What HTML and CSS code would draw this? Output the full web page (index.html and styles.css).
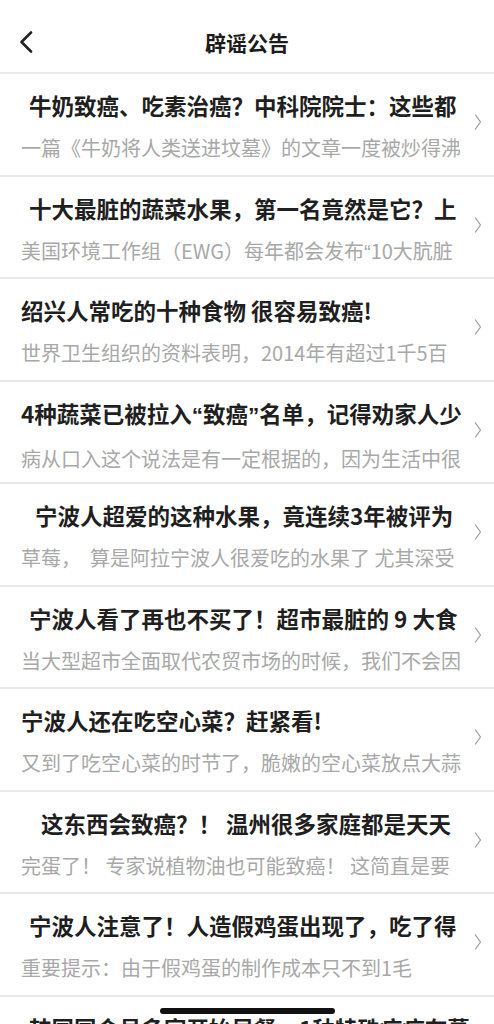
FILE: index.html
```html
<!DOCTYPE html>
<html lang="zh-CN">
<head>
<meta charset="utf-8">
<title>辟谣公告</title>
<link rel="stylesheet" href="styles.css">
</head>
<body>
<div class="page">
  <header class="topbar">
    <svg class="back" viewBox="0 0 14 22" width="14" height="22"><path d="M12 1.5 L2.5 11 L12 20.5" fill="none" stroke="#222" stroke-width="2.6" stroke-linecap="round" stroke-linejoin="round"/></svg>
    <h1 class="topbar-title">辟谣公告</h1>
  </header>
  <ul class="list">
    <li class="item">
      <div class="text">
        <div class="title indent-s">牛奶致癌、吃素治癌？中科院院士：这些都</div>
        <div class="summary">一篇《牛奶将人类送进坟墓》的文章一度被炒得沸</div>
      </div>
      <svg class="chev" viewBox="0 0 8 16" width="8" height="16"><path d="M1.5 1 L6.5 8 L1.5 15" fill="none" stroke="#9a9a9a" stroke-width="1.2" stroke-linecap="round" stroke-linejoin="round"/></svg>
    </li>
    <li class="item">
      <div class="text">
        <div class="title indent-s">十大最脏的蔬菜水果，第一名竟然是它？上</div>
        <div class="summary">美国环境工作组（EWG）每年都会发布<span class="latin">“</span>10大肮脏</div>
      </div>
      <svg class="chev" viewBox="0 0 8 16" width="8" height="16"><path d="M1.5 1 L6.5 8 L1.5 15" fill="none" stroke="#9a9a9a" stroke-width="1.2" stroke-linecap="round" stroke-linejoin="round"/></svg>
    </li>
    <li class="item">
      <div class="text">
        <div class="title">绍兴人常吃的十种食物 很容易致癌!</div>
        <div class="summary">世界卫生组织的资料表明，2014年有超过1千5百</div>
      </div>
      <svg class="chev" viewBox="0 0 8 16" width="8" height="16"><path d="M1.5 1 L6.5 8 L1.5 15" fill="none" stroke="#9a9a9a" stroke-width="1.2" stroke-linecap="round" stroke-linejoin="round"/></svg>
    </li>
    <li class="item">
      <div class="text">
        <div class="title">4种蔬菜已被拉入<span class="latin">“</span>致癌<span class="latin">”</span>名单，记得劝家人少</div>
        <div class="summary">病从口入这个说法是有一定根据的，因为生活中很</div>
      </div>
      <svg class="chev" viewBox="0 0 8 16" width="8" height="16"><path d="M1.5 1 L6.5 8 L1.5 15" fill="none" stroke="#9a9a9a" stroke-width="1.2" stroke-linecap="round" stroke-linejoin="round"/></svg>
    </li>
    <li class="item">
      <div class="text">
        <div class="title indent-m">宁波人超爱的这种水果，竟连续3年被评为</div>
        <div class="summary">草莓，&nbsp;&nbsp;算是阿拉宁波人很爱吃的水果了 尤其深受</div>
      </div>
      <svg class="chev" viewBox="0 0 8 16" width="8" height="16"><path d="M1.5 1 L6.5 8 L1.5 15" fill="none" stroke="#9a9a9a" stroke-width="1.2" stroke-linecap="round" stroke-linejoin="round"/></svg>
    </li>
    <li class="item">
      <div class="text">
        <div class="title indent-s">宁波人看了再也不买了！超市最脏的 9 大食</div>
        <div class="summary">当大型超市全面取代农贸市场的时候，我们不会因</div>
      </div>
      <svg class="chev" viewBox="0 0 8 16" width="8" height="16"><path d="M1.5 1 L6.5 8 L1.5 15" fill="none" stroke="#9a9a9a" stroke-width="1.2" stroke-linecap="round" stroke-linejoin="round"/></svg>
    </li>
    <li class="item">
      <div class="text">
        <div class="title">宁波人还在吃空心菜？赶紧看!</div>
        <div class="summary">又到了吃空心菜的时节了，脆嫩的空心菜放点大蒜</div>
      </div>
      <svg class="chev" viewBox="0 0 8 16" width="8" height="16"><path d="M1.5 1 L6.5 8 L1.5 15" fill="none" stroke="#9a9a9a" stroke-width="1.2" stroke-linecap="round" stroke-linejoin="round"/></svg>
    </li>
    <li class="item">
      <div class="text">
        <div class="title indent-l">这东西会致癌？！ 温州很多家庭都是天天</div>
        <div class="summary">完蛋了！&nbsp;专家说植物油也可能致癌！&nbsp;这简直是要</div>
      </div>
      <svg class="chev" viewBox="0 0 8 16" width="8" height="16"><path d="M1.5 1 L6.5 8 L1.5 15" fill="none" stroke="#9a9a9a" stroke-width="1.2" stroke-linecap="round" stroke-linejoin="round"/></svg>
    </li>
    <li class="item">
      <div class="text">
        <div class="title indent-s">宁波人注意了！人造假鸡蛋出现了，吃了得</div>
        <div class="summary">重要提示：由于假鸡蛋的制作成本只不到1毛</div>
      </div>
      <svg class="chev" viewBox="0 0 8 16" width="8" height="16"><path d="M1.5 1 L6.5 8 L1.5 15" fill="none" stroke="#9a9a9a" stroke-width="1.2" stroke-linecap="round" stroke-linejoin="round"/></svg>
    </li>
    <li class="item">
      <div class="text">
        <div class="title indent-s">韩国国会员多家开始早餐，1种特殊病症在蔓</div>
        <div class="summary">据说这种病症已经在多个国家出现了</div>
      </div>
      <svg class="chev" viewBox="0 0 8 16" width="8" height="16"><path d="M1.5 1 L6.5 8 L1.5 15" fill="none" stroke="#9a9a9a" stroke-width="1.2" stroke-linecap="round" stroke-linejoin="round"/></svg>
    </li>
  </ul>
  <div class="home-indicator"></div>
</div>
</body>
</html>
```
FILE: styles.css
```css
html, body {
  margin: 0;
  padding: 0;
  background: #ffffff;
}
body {
  font-family: "Noto Sans CJK SC", "Noto Sans", sans-serif;
  color: #1f1f1f;
}
.page {
  width: 494px;
  height: 1024px;
  overflow: hidden;
  position: relative;
}
.topbar {
  height: 72px;
  display: flex;
  align-items: center;
  justify-content: center;
  position: relative;
  box-sizing: border-box;
  padding-top: 12px;
}
.back {
  position: absolute;
  left: 19px;
  top: 31px;
}
.topbar-title {
  margin: 0;
  font-size: 21px;
  font-weight: 700;
  line-height: 28px;
  color: #1c1c1c;
}
.list {
  list-style: none;
  margin: 0;
  padding: 0;
}
.item {
  height: 100.5px;
  border-top: 2px solid #e9e9e9;
  display: flex;
  align-items: center;
}
.text {
  flex: 1;
  min-width: 0;
  align-self: flex-start;
  padding: 16px 0 0 21px;
}
.title {
  font-size: 22.5px;
  font-weight: 700;
  line-height: 30px;
  color: #1f1f1f;
  white-space: nowrap;
}
.latin {
  font-family: "Liberation Sans", sans-serif;
}
.indent-s { padding-left: 8px; }
.indent-m { padding-left: 14px; }
.indent-l { padding-left: 20px; }
.summary {
  margin-top: 14px;
  font-size: 20px;
  line-height: 28px;
  color: #a8a8a8;
  white-space: nowrap;
}
.chev {
  flex: none;
  margin: -4px 12px 0 6px;
}
.home-indicator {
  position: absolute;
  left: 160px;
  top: 1008px;
  width: 175px;
  height: 6px;
  border-radius: 3px;
  background: #111;
}
```
